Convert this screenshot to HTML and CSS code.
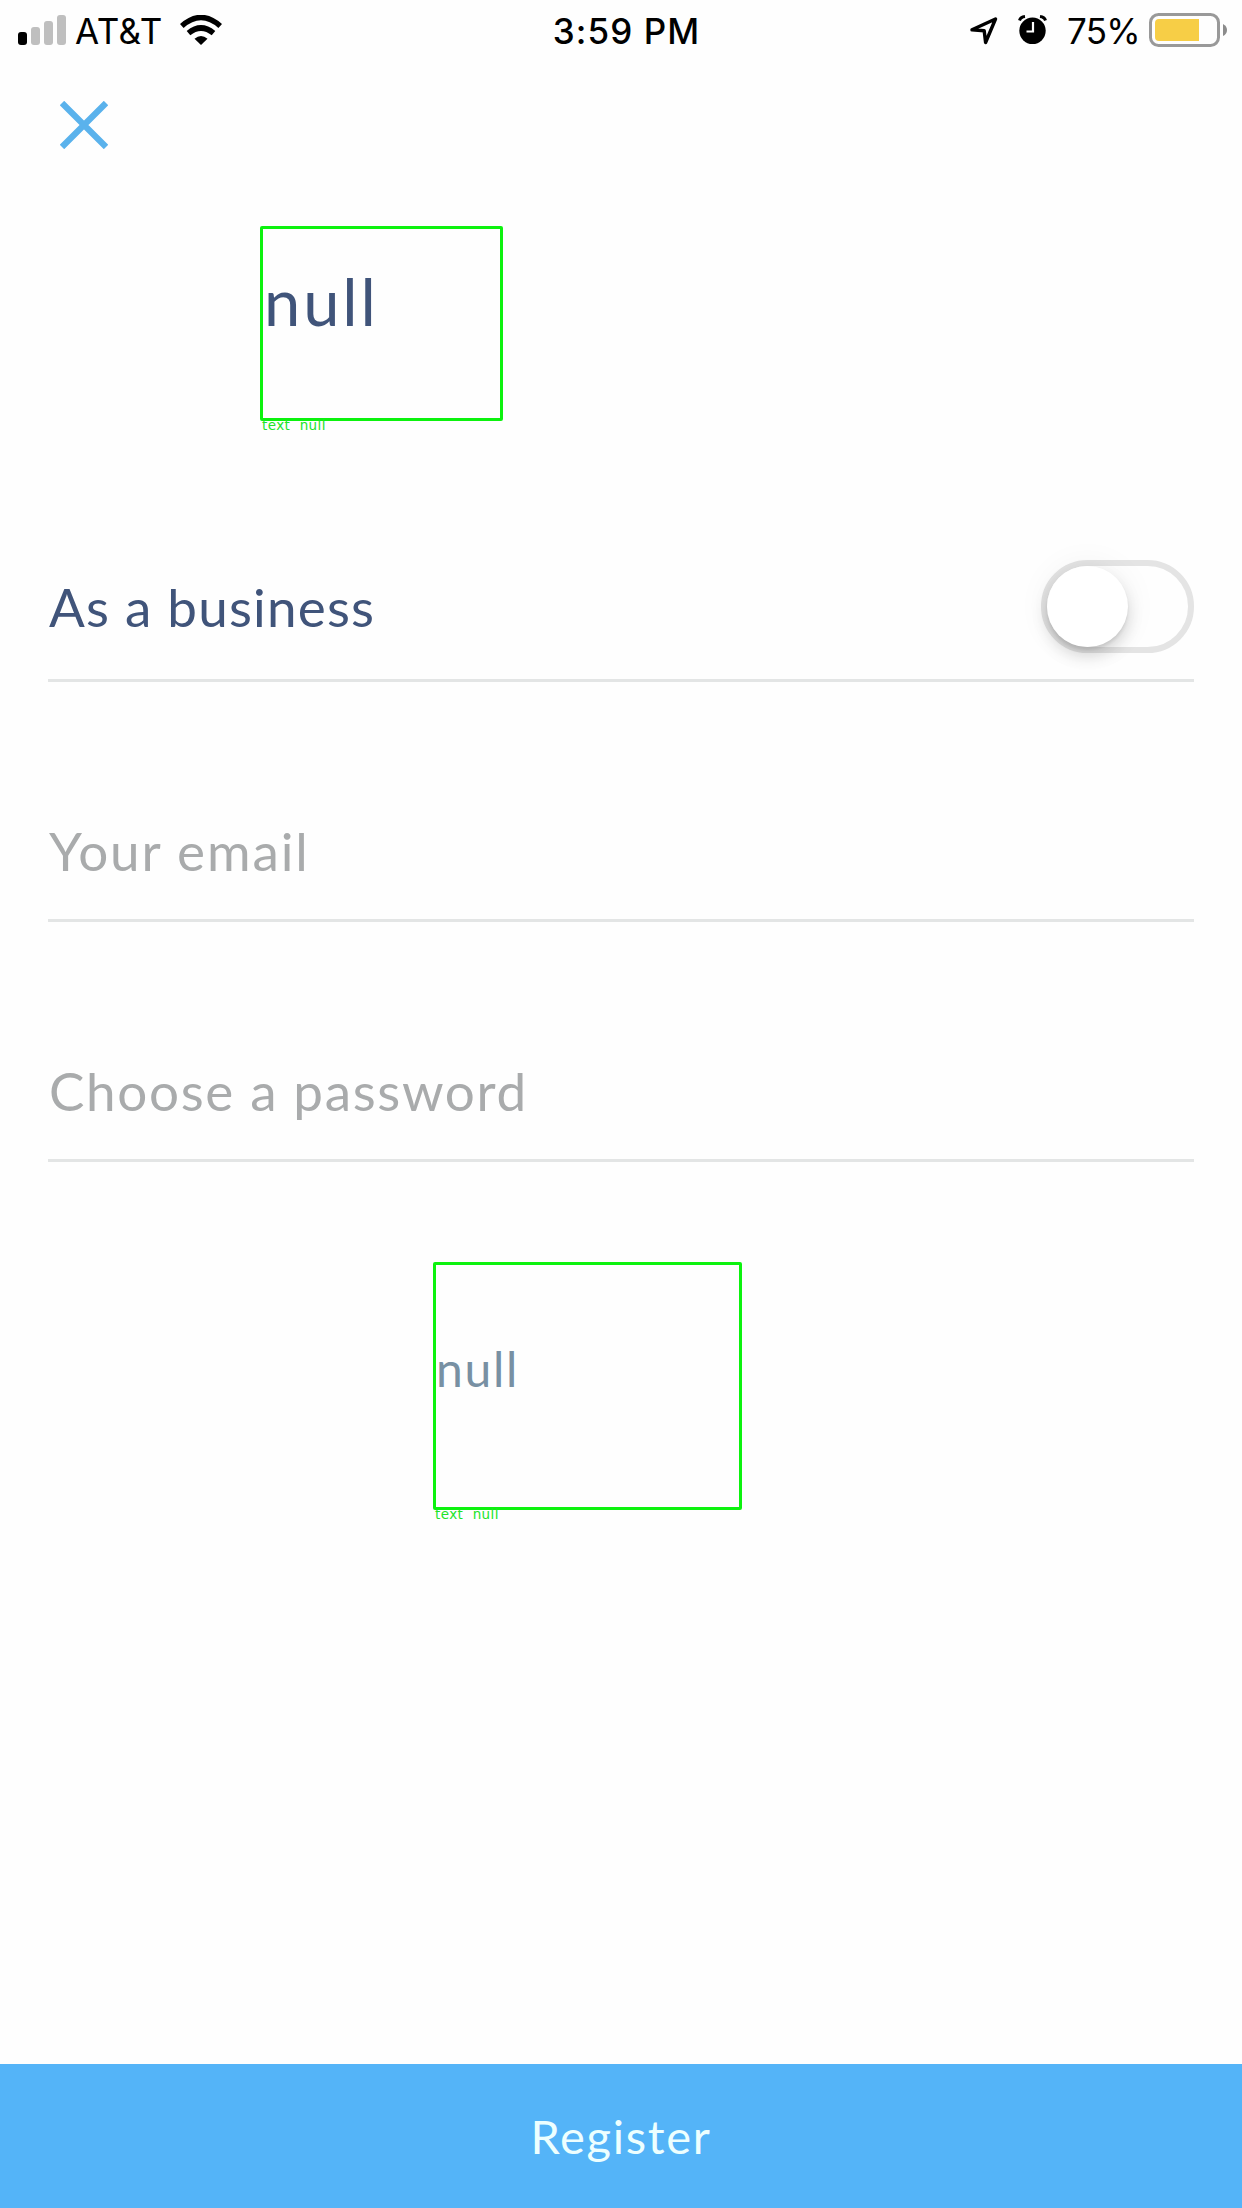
FILE: index.html
```html
<!DOCTYPE html>
<html lang="en">
<head>
<meta charset="utf-8">
<title>Register</title>
<link rel="stylesheet" href="styles.css">
</head>
<body>
<div class="screen">
  <header class="status">
    <div class="status-left">
      <svg class="signal" width="48" height="30" viewBox="0 0 48 30">
        <rect x="0" y="17" width="9" height="13" rx="3" fill="#000"/>
        <rect x="13" y="12" width="9" height="18" rx="3" fill="#bfbfbf"/>
        <rect x="26" y="6" width="9" height="24" rx="3" fill="#bfbfbf"/>
        <rect x="39" y="0" width="9" height="30" rx="3" fill="#bfbfbf"/>
      </svg>
      <span class="carrier">AT&amp;T</span>
      <svg class="wifi" width="42" height="30" viewBox="0 0 42 30">
        <path d="M1.800 11Q21-6 40.200 11" fill="none" stroke="#000" stroke-width="5.400"/>
        <path d="M8.500 18.200Q21 7.800 33.500 18.200" fill="none" stroke="#000" stroke-width="5.600"/>
        <path d="M14.500 23.800Q21 18.400 27.500 23.800L21 30z"/>
      </svg>
    </div>
    <span class="time">3:59 PM</span>
    <div class="status-right">
      <svg class="location" width="28" height="28" viewBox="0 0 28 28">
        <path d="M2 12.800L25.500 2L15.600 25.500L14.200 13.700Z" fill="none" stroke="#000" stroke-width="3.400" stroke-linejoin="round"/>
      </svg>
      <svg class="alarm" width="29" height="29" viewBox="0 0 29 29">
        <circle cx="14.500" cy="15.800" r="13.200"/>
        <path d="M1.500 5.500Q2.500 2 7 1.500M27.500 5.500Q26.500 2 22 1.500" fill="none" stroke="#000" stroke-width="3"/>
        <path d="M15 7V16.500H8.500" fill="none" stroke="#fff" stroke-width="2.200"/>
      </svg>
      <span class="percent">75%</span>
      <svg class="battery" width="78" height="34" viewBox="0 0 78 34">
        <rect x="1.500" y="1.500" width="68" height="31" rx="8" fill="none" stroke="#999" stroke-width="3"/>
        <path d="M10 6H50V28H10Q6 28 6 24V10Q6 6 10 6Z" fill="#f7ce46"/>
        <path d="M74 11Q78 13 78 17T74 23Z" fill="#8c8c8c"/>
      </svg>
    </div>
  </header>

  <button class="close" aria-label="Close">
    <svg width="48" height="48" viewBox="0 0 48 48"><path d="M2 2L46 46M46 2L2 46" stroke="#5ab2ec" stroke-width="6.200"/></svg>
  </button>

  <section class="region region-title">
    <div class="frame"><span class="value">null</span></div>
    <span class="caption">text&nbsp; null</span>
  </section>

  <main class="form">
    <div class="field field-switch">
      <span class="label">As a business</span>
      <span class="switch"><span class="knob"></span></span>
    </div>
    <div class="field"><span class="hint email">Your email</span></div>
    <div class="field"><span class="hint password">Choose a password</span></div>
  </main>

  <section class="region region-terms">
    <div class="frame"><span class="value">null</span></div>
    <span class="caption">text&nbsp; null</span>
  </section>

  <button class="register">Register</button>
</div>
</body>
</html>
```
FILE: styles.css
```css
* { box-sizing: border-box; }
body { margin: 0; background: #fefefe; font-family: Lato, sans-serif; }
button { border: 0; padding: 0; font: inherit; }
svg { display: block; flex: none; }

.screen { display: flex; flex-direction: column; width: 1242px; height: 2208px; }

.status {
  display: grid;
  grid-template-columns: 1fr auto 1fr;
  height: 62px;
  padding: 0 15px 0 18px;
  font: 400 35px/62px Inter, sans-serif;
  color: #000;
  white-space: nowrap;
}
.status-left, .status-right { display: flex; }
.status-right { justify-content: flex-end; }
.signal { margin-top: 15px; }
.carrier { width: 93px; margin-left: 9px; letter-spacing: .5px; }
.wifi { margin: 15px 0 0 12px; }
.time { padding-left: 8px; font-weight: 550; letter-spacing: 1.1px; }
.location { margin: 17px 20px 0 0; }
.alarm { margin: 15px 20px 0 0; }
.percent { width: 74px; margin-right: 8px; letter-spacing: -.8px; }
.battery { margin-top: 13px; }

.close { width: 48px; height: 48px; margin: 39px 0 0 60px; background: none; }

.region { display: flex; flex-direction: column; align-items: flex-start; }
.frame { border: 3px solid #0cf20e; border-radius: 2px; }
.value { display: block; }
.region-title { height: 221px; margin: 77px 0 0 260px; }
.region-title .frame { width: 243px; height: 195px; padding-left: 1px; }
.region-title .value { margin-top: 32px; font-size: 65px; line-height: 80px; color: #40547a; letter-spacing: 2.9px; }
.region-terms { height: 274px; margin: 100px 0 0 433px; }
.region-terms .frame { width: 309px; height: 248px; }
.region-terms .value { margin-top: 74px; font-size: 48px; line-height: 60px; color: #7890a3; letter-spacing: 1.7px; }
.caption { margin: -3px 0 0 2px; font: 13.5px/14px "DejaVu Sans", sans-serif; color: #20e428; letter-spacing: .4px; }

.form { display: flex; flex-direction: column; gap: 98px; margin: 85px 48px 0; }
.field { display: flex; align-items: center; height: 142px; padding-top: 2px; border-bottom: 3px solid #e3e5e5; font-size: 53px; line-height: 64px; }
.field-switch { justify-content: space-between; height: 150px; }
.label { margin-left: 1px; color: #40547a; letter-spacing: 1.2px; }
.hint { margin-left: 1px; color: #a9abac; }
.email { letter-spacing: 1.9px; }
.password { letter-spacing: 1.65px; }
.switch { width: 153px; height: 93px; border: 6px solid #e4e4e4; border-radius: 47px; }
.knob { display: block; width: 81px; height: 81px; border-radius: 50%; background: #fff; box-shadow: 0 9px 16px rgba(0, 0, 0, .15), 0 3px 3px rgba(0, 0, 0, .08), 0 0 34px rgba(0, 0, 0, .06); }

.register { height: 144px; margin-top: auto; background: #54b4f8; color: #edffff; font-size: 47px; line-height: 144px; letter-spacing: 1.7px; }
```
